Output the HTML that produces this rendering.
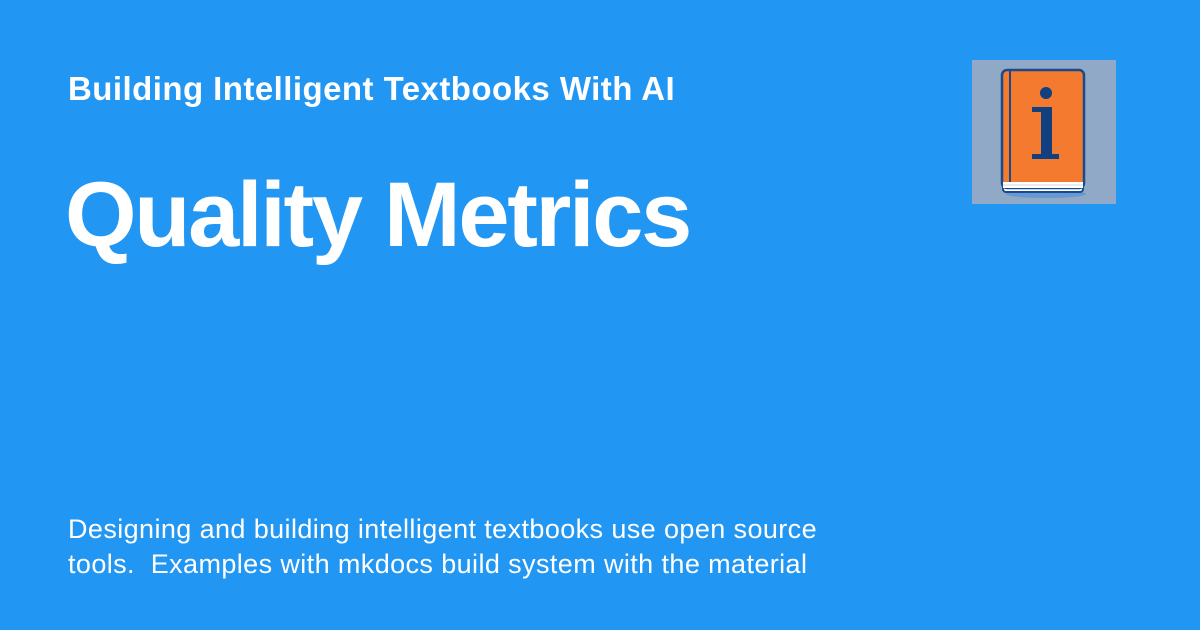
<!DOCTYPE html>
<html><head><style>
body{margin:0;width:1200px;height:630px;background:#2196f3;position:relative;overflow:hidden;font-family:"Liberation Sans",sans-serif;color:#fff}
.t1{position:absolute;left:68px;top:70px;font-size:33px;font-weight:bold;white-space:nowrap;letter-spacing:0.45px}
.t2{position:absolute;left:65px;top:163px;font-size:92px;font-weight:bold;white-space:nowrap;letter-spacing:-2.3px}
.d{position:absolute;left:68px;top:512px;font-size:27px;line-height:35px;white-space:nowrap;letter-spacing:0.4px}
</style></head><body>
<div class="t1">Building Intelligent Textbooks With AI</div>
<div class="t2">Quality Metrics</div>
<div class="d">Designing and building intelligent textbooks use open source<br>tools.&nbsp; Examples with mkdocs build system with the material</div>
<svg style="position:absolute;left:972px;top:60px" width="144" height="144" viewBox="0 0 144 144">
<rect width="144" height="144" fill="#8fa9c6"/>
<ellipse cx="74" cy="134" rx="40" ry="4" fill="#4a90e0" opacity=".6"/>
<rect x="31" y="120" width="80" height="12" rx="3" fill="#fff" stroke="#1a4a8a" stroke-width="2"/>
<rect x="30" y="10" width="82" height="118" rx="5" fill="#f47a30" stroke="#1a4a8a" stroke-width="2.5"/>
<line x1="38" y1="11" x2="38" y2="127" stroke="#1a4a8a" stroke-width="2"/>
<rect x="31" y="122" width="80" height="6" fill="#fff"/>
<line x1="31" y1="125" x2="111" y2="125" stroke="#cfd8e8" stroke-width="1"/>
<circle cx="74" cy="33" r="6" fill="#123f80"/>
<rect x="69" y="48" width="11" height="48" fill="#123f80"/>
<rect x="60" y="47" width="20" height="5" fill="#123f80"/>
<rect x="60" y="94" width="27" height="5" fill="#123f80"/>
</svg>
</body></html>
